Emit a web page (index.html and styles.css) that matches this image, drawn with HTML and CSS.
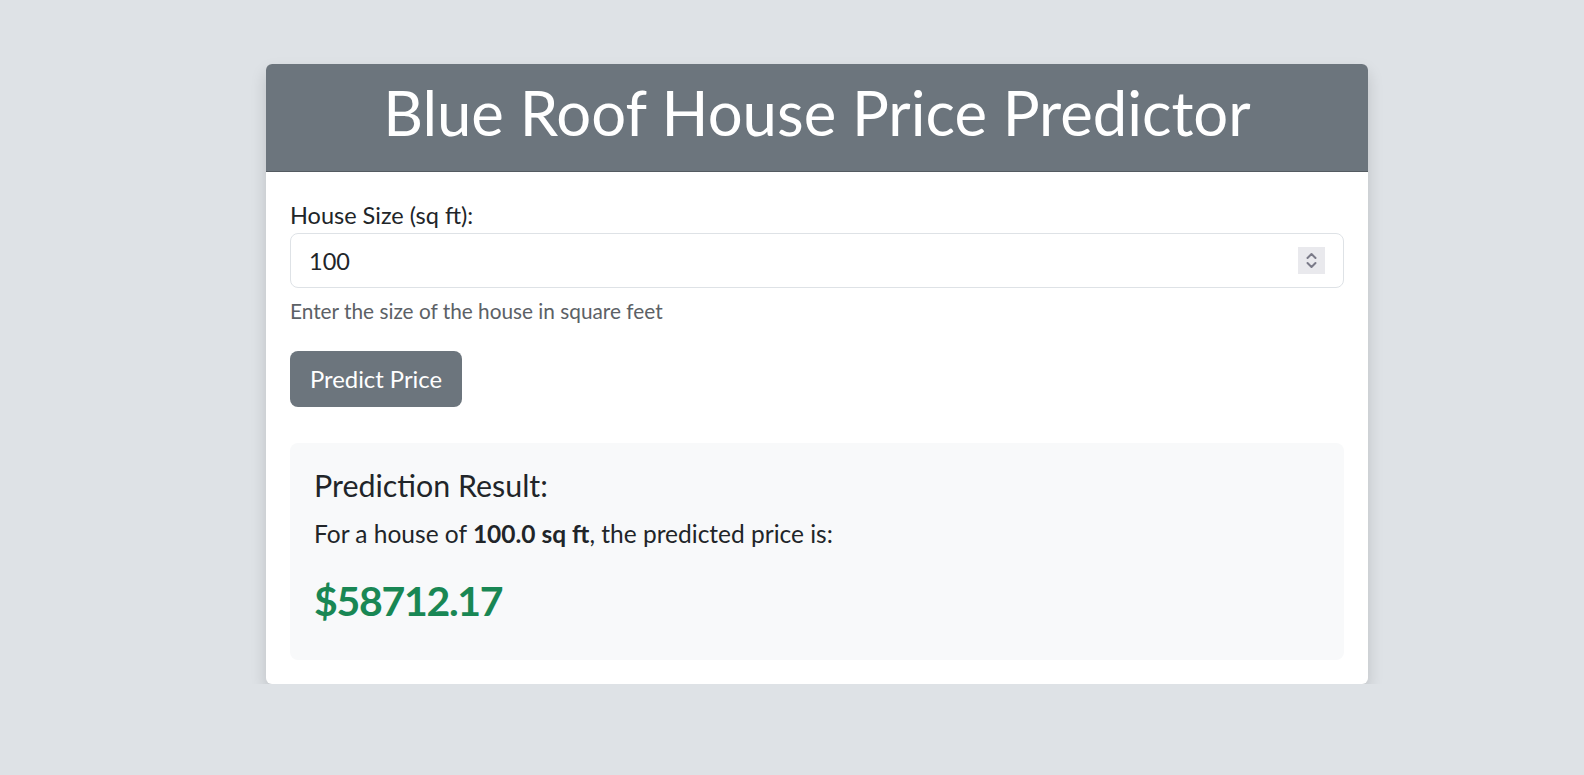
FILE: index.html
```html
<!DOCTYPE html>
<html lang="en">
<head>
<meta charset="utf-8">
<title>Blue Roof House Price Predictor</title>
<link rel="stylesheet" href="styles.css">
</head>
<body>
<main class="page">
  <section class="card">
    <header class="card-header">
      <h1 class="title">Blue Roof House Price Predictor</h1>
    </header>
    <div class="card-body">
      <form class="form">
        <label class="label" for="size">House Size (sq ft):</label>
        <div class="field">
          <input class="input" id="size" type="text" value="100">
          <span class="spin" aria-hidden="true">
            <svg width="27" height="27" viewBox="0 0 27 27">
              <path d="M9.5 11 L13.5 7 L17.5 11" fill="none" stroke="#7a7a88" stroke-width="2" stroke-linecap="round" stroke-linejoin="round"/>
              <path d="M9.5 16 L13.5 20 L17.5 16" fill="none" stroke="#7a7a88" stroke-width="2" stroke-linecap="round" stroke-linejoin="round"/>
            </svg>
          </span>
        </div>
        <div class="help">Enter the size of the house in square feet</div>
        <button class="btn" type="button">Predict Price</button>
      </form>
      <div class="result">
        <h4 class="result-title">Prediction Result:</h4>
        <p class="result-text">For a house of <strong>100.0 sq ft</strong>, the predicted price is:</p>
        <div class="price">$58712.17</div>
      </div>
    </div>
  </section>
</main>
</body>
</html>
```
FILE: styles.css
```css
html, body {
  margin: 0;
  padding: 0;
}
body {
  background: #dee2e6;
  font-family: "Lato", "Liberation Sans", sans-serif;
  color: #212529;
}
.page {
  padding-top: 64px;
  padding-left: 266px;
}
.card {
  width: 1102px;
  background: #fff;
  border-radius: 6px;
  box-shadow: 0 8px 16px rgba(0, 0, 0, 0.15);
  overflow: hidden;
}
.card-header {
  background: #6c757d;
  padding: 11px 16px 22px;
  border-bottom: 1px solid rgba(0, 0, 0, 0.22);
  text-align: center;
}
.title {
  margin: 0;
  color: #fff;
  font-size: 61.6px;
  font-weight: 400;
  line-height: 74px;
}
.card-body {
  padding: 26px 24px 24px;
}
.form {
  display: flex;
  flex-direction: column;
  align-items: flex-start;
}
.label {
  font-size: 23.5px;
  line-height: 35px;
}
.field {
  position: relative;
  align-self: stretch;
}
.input {
  display: block;
  box-sizing: border-box;
  width: 100%;
  height: 55px;
  margin: 0;
  padding: 0 16px 0 18px;
  border: 1px solid #dee2e6;
  border-radius: 8px;
  background: #fff;
  font-family: inherit;
  font-size: 23.5px;
  color: #212529;
  outline: none;
}
.spin {
  position: absolute;
  right: 19px;
  top: 14px;
  width: 27px;
  height: 27px;
  background: #e9e9ed;
  display: flex;
}
.help {
  margin-top: 8px;
  font-size: 20.8px;
  line-height: 30.75px;
  color: #5c6166;
}
.btn {
  margin-top: 24px;
  height: 56px;
  padding: 0 20px;
  border: 0;
  border-radius: 8px;
  background: #6c757d;
  color: #fff;
  font-family: inherit;
  font-size: 23.8px;
}
.result {
  margin-top: 36px;
  background: #f8f9fa;
  border-radius: 8px;
  padding: 24px 24px 35px;
}
.result-title {
  margin: 0 0 13px;
  font-size: 30.4px;
  font-weight: 400;
  line-height: 1.2;
}
.result-text {
  margin: 0 0 23px;
  font-size: 24.5px;
  line-height: 1.5;
}
.result-text strong {
  font-weight: 700;
}
.price {
  font-size: 41px;
  font-weight: 700;
  line-height: 1.2;
  letter-spacing: -1.3px;
  color: #198754;
}
```
